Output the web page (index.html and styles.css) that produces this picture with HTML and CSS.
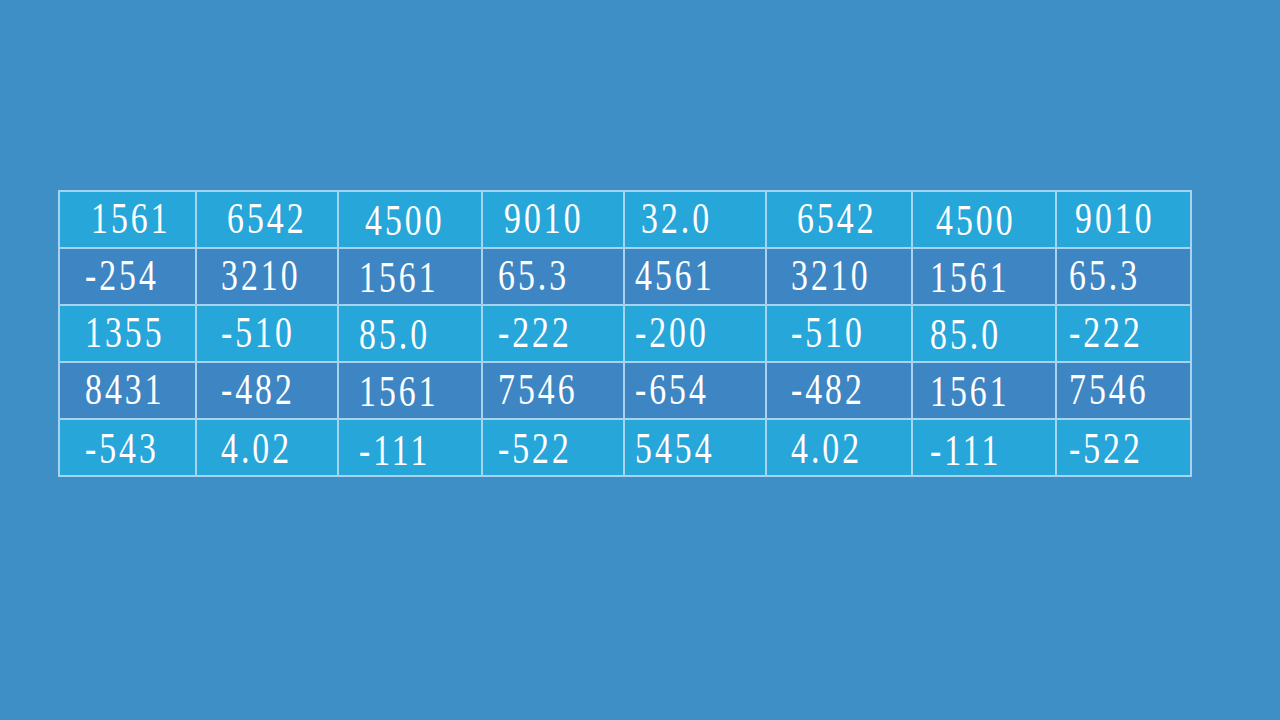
FILE: index.html
```html
<!DOCTYPE html>
<html>
<head>
<title>Number Table</title>
<link rel="stylesheet" href="styles.css">
</head>
<body>

<div class="grid">

<div class="row light first">
<div class="cell"><span>1561</span></div>
<div class="cell"><span>6542</span></div>
<div class="cell"><span>4500</span></div>
<div class="cell"><span>9010</span></div>
<div class="cell"><span>32.0</span></div>
<div class="cell"><span>6542</span></div>
<div class="cell"><span>4500</span></div>
<div class="cell"><span>9010</span></div>
</div>

<div class="row dark">
<div class="cell"><span>-254</span></div>
<div class="cell"><span>3210</span></div>
<div class="cell"><span>1561</span></div>
<div class="cell"><span>65.3</span></div>
<div class="cell"><span>4561</span></div>
<div class="cell"><span>3210</span></div>
<div class="cell"><span>1561</span></div>
<div class="cell"><span>65.3</span></div>
</div>

<div class="row light">
<div class="cell"><span>1355</span></div>
<div class="cell"><span>-510</span></div>
<div class="cell"><span>85.0</span></div>
<div class="cell"><span>-222</span></div>
<div class="cell"><span>-200</span></div>
<div class="cell"><span>-510</span></div>
<div class="cell"><span>85.0</span></div>
<div class="cell"><span>-222</span></div>
</div>

<div class="row dark">
<div class="cell"><span>8431</span></div>
<div class="cell"><span>-482</span></div>
<div class="cell"><span>1561</span></div>
<div class="cell"><span>7546</span></div>
<div class="cell"><span>-654</span></div>
<div class="cell"><span>-482</span></div>
<div class="cell"><span>1561</span></div>
<div class="cell"><span>7546</span></div>
</div>

<div class="row light last">
<div class="cell"><span>-543</span></div>
<div class="cell"><span>4.02</span></div>
<div class="cell"><span>-111</span></div>
<div class="cell"><span>-522</span></div>
<div class="cell"><span>5454</span></div>
<div class="cell"><span>4.02</span></div>
<div class="cell"><span>-111</span></div>
<div class="cell"><span>-522</span></div>
</div>

</div>

</body>
</html>
```

FILE: styles.css
```css
body{
margin:0;
background-color:#3e8fc6;
font-family:"Liberation Serif", "Times New Roman", serif;
}

.grid{
display:grid;
grid-template-columns:135px 140px 142px 140px 140px 144px 142px 133px;
grid-auto-rows:55px;
gap:2px;
padding:2px;
width:max-content;
margin:190px 0 0 58px;
background-color:#a7d3ef;
}

.row{
display:contents;
}

.light .cell{
background-color:#27a6da;
}

.dark .cell{
background-color:#3e86c3;
}

.cell{
padding-top:4px;
color:white;
font-size:45px;
line-height:45px;
white-space:nowrap;
overflow:hidden;
}

.cell span{
display:inline-block;
letter-spacing:4px;
transform:scaleX(0.75);
transform-origin:left top;
}

/* left offsets per column */
.cell:nth-child(1){ padding-left:25px; }
.cell:nth-child(2){ padding-left:24px; }
.cell:nth-child(3){ padding-left:20px; padding-top:6px; }
.cell:nth-child(4){ padding-left:15px; }
.cell:nth-child(5){ padding-left:10px; }
.cell:nth-child(6){ padding-left:24px; }
.cell:nth-child(7){ padding-left:17px; padding-top:6px; }
.cell:nth-child(8){ padding-left:12px; }

.first .cell span{
margin-left:6px;
}

.last .cell span{
margin-top:2px;
}
```
